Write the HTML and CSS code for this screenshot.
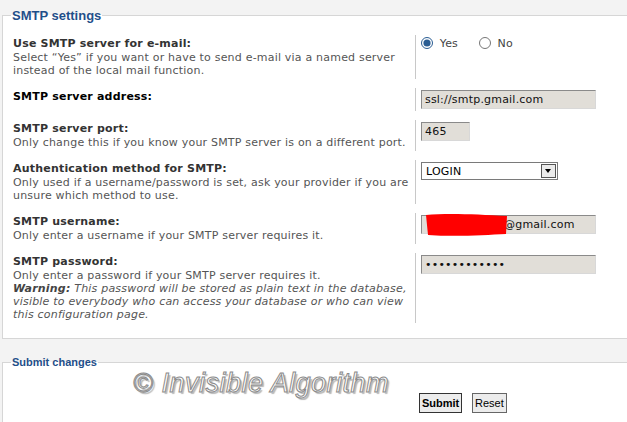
FILE: index.html
```html
<!DOCTYPE html>
<html lang="en">

<head>
    <meta charset="UTF-8">
    <title>SMTP settings</title>
    <link rel="stylesheet" href="styles.css">
</head>

<body>
    <fieldset class="panel">
        <legend>SMTP settings</legend>
        <table class="settings">
            <tr class="row-smtp">
                <td class="label">
                    <div class="title">Use SMTP server for e-mail:</div>
                    <div class="desc">Select “Yes” if you want or have to send e-mail via a named server instead of the local mail function.</div>
                </td>
                <td class="field">
                    <label class="choice"><input type="radio" name="smtp" checked> Yes</label>
                    <label class="choice"><input type="radio" name="smtp"> No</label>
                </td>
            </tr>
            <tr class="row-address">
                <td class="label">
                    <div class="title strong">SMTP server address:</div>
                </td>
                <td class="field">
                    <input class="text wide" type="text" value="ssl://smtp.gmail.com">
                </td>
            </tr>
            <tr class="row-port">
                <td class="label">
                    <div class="title">SMTP server port:</div>
                    <div class="desc">Only change this if you know your SMTP server is on a different port.</div>
                </td>
                <td class="field">
                    <input class="text small" type="text" value="465">
                </td>
            </tr>
            <tr class="row-auth">
                <td class="label">
                    <div class="title">Authentication method for SMTP:</div>
                    <div class="desc">Only used if a username/password is set, ask your provider if you are unsure which method to use.</div>
                </td>
                <td class="field">
                    <span class="select-wrap">
                        <select class="select">
                            <option>LOGIN</option>
                        </select>
                        <span class="select-arrow"></span>
                    </span>
                </td>
            </tr>
            <tr class="row-user">
                <td class="label">
                    <div class="title">SMTP username:</div>
                    <div class="desc">Only enter a username if your SMTP server requires it.</div>
                </td>
                <td class="field">
                    <span class="redact-wrap">
                        <input class="text wide user" type="text" value="@gmail.com">
                        <svg class="redact" width="84" height="24" viewBox="0 0 84 24">
                            <path d="M1 2 C20 0 50 1 82 3 L81 21 C60 22 30 24 3 22 Z" fill="#ff0000" />
                        </svg>
                    </span>
                </td>
            </tr>
            <tr class="row-pass">
                <td class="label">
                    <div class="title">SMTP password:</div>
                    <div class="desc">Only enter a password if your SMTP server requires it.</div>
                    <div class="desc warn"><b>Warning:</b> This password will be stored as plain text in the database, visible to everybody who can access your database or who can view this configuration page.</div>
                </td>
                <td class="field">
                    <input class="text wide" type="password" value="abcdefghijkl">
                </td>
            </tr>
        </table>
    </fieldset>

    <fieldset class="panel submit">
        <legend>Submit changes</legend>
        <div class="actions">
            <button class="btn primary">Submit</button>
            <button class="btn">Reset</button>
        </div>
        <div class="watermark">© Invisible Algorithm</div>
    </fieldset>
</body>

</html>
```

FILE: styles.css
```css
body {
    margin: 0;
    background: #f3f3f3;
    font-family: 'DejaVu Sans', Verdana, sans-serif;
    font-size: 11px;
    letter-spacing: 0.2px;
    color: #333;
    overflow: hidden;
}

.panel {
    margin: 8px -10px 0 2px;
    padding: 0 0 6px 0;
    border: 1px solid #d6d6d6;
    background: #fff;
    position: relative;
}

.panel legend {
    margin-left: 8px;
    padding: 0 1px;
    font-family: 'Liberation Sans', Arial, sans-serif;
    font-weight: bold;
    font-size: 13px;
    letter-spacing: 0;
    color: #1f4f8a;
}

.settings {
    border-collapse: separate;
    border-spacing: 0 9px;
    margin-top: 3px;
}

.settings td {
    vertical-align: top;
    padding: 2px 0;
}

.settings .label {
    width: 402px;
    padding-left: 10px;
}

.settings .field {
    border-left: 1px solid #c8c8c8;
    padding-left: 5px;
}

.title {
    font-weight: bold;
    line-height: 14px;
    color: #333;
}

.title.strong {
    color: #000;
}

.desc {
    line-height: 13px;
    color: #555;
}

.desc.warn {
    font-style: italic;
}

.desc.warn b {
    color: #444;
}

.choice {
    margin-right: 17px;
    color: #444;
}

.choice input {
    margin: 0 3px 0 0;
    width: 12px;
    height: 12px;
    vertical-align: -2px;
    accent-color: #2a5d93;
}

.text {
    box-sizing: border-box;
    height: 19px;
    padding: 1px 3px;
    border: 1px solid;
    border-color: #8a8a8a #d8d8d8 #d8d8d8 #8a8a8a;
    background: #e1ded8;
    font-family: 'DejaVu Sans', Verdana, sans-serif;
    font-size: 11px;
    letter-spacing: 0.2px;
    color: #111;
}

.text.wide {
    width: 175px;
}

.text.small {
    width: 49px;
}

.text.user {
    padding-left: 82px;
}

.select-wrap,
.redact-wrap {
    position: relative;
    display: inline-block;
}

.select {
    appearance: none;
    box-sizing: border-box;
    width: 137px;
    height: 18px;
    padding: 0 4px;
    border: 1px solid #7a7a7a;
    background: #fff;
    font-family: 'DejaVu Sans', Verdana, sans-serif;
    font-size: 11px;
    letter-spacing: 0.2px;
    color: #000;
}

.select-arrow {
    position: absolute;
    right: 2px;
    top: 2px;
    width: 13px;
    height: 12px;
    border: 1px solid #555;
    background: #ebebeb;
}

.select-arrow::after {
    content: "";
    position: absolute;
    left: 3px;
    top: 4px;
    border-left: 3.5px solid transparent;
    border-right: 3.5px solid transparent;
    border-top: 4px solid #000;
}

.redact {
    position: absolute;
    left: 4px;
    top: -2px;
}

.panel.submit {
    margin-top: 17px;
    height: 60px;
}

.panel.submit legend {
    font-size: 11px;
}

.actions {
    padding: 25px 0 0 416px;
}

.btn {
    height: 20px;
    padding: 0 2px;
    margin-right: 6px;
    border: 1px solid #666;
    background: #ececec;
    font-family: 'Liberation Sans', Arial, sans-serif;
    font-size: 11px;
    color: #000;
}

.btn.primary {
    font-weight: bold;
    border-color: #333;
}

.watermark {
    position: absolute;
    left: 130px;
    top: 0;
    font-family: 'Liberation Sans', Arial, sans-serif;
    font-style: italic;
    font-size: 27px;
    letter-spacing: 0.5px;
    color: #fff;
    -webkit-text-stroke: 1px #8a8a8a;
    text-shadow: 2px 2px 1px #b8b8b8;
}
```
